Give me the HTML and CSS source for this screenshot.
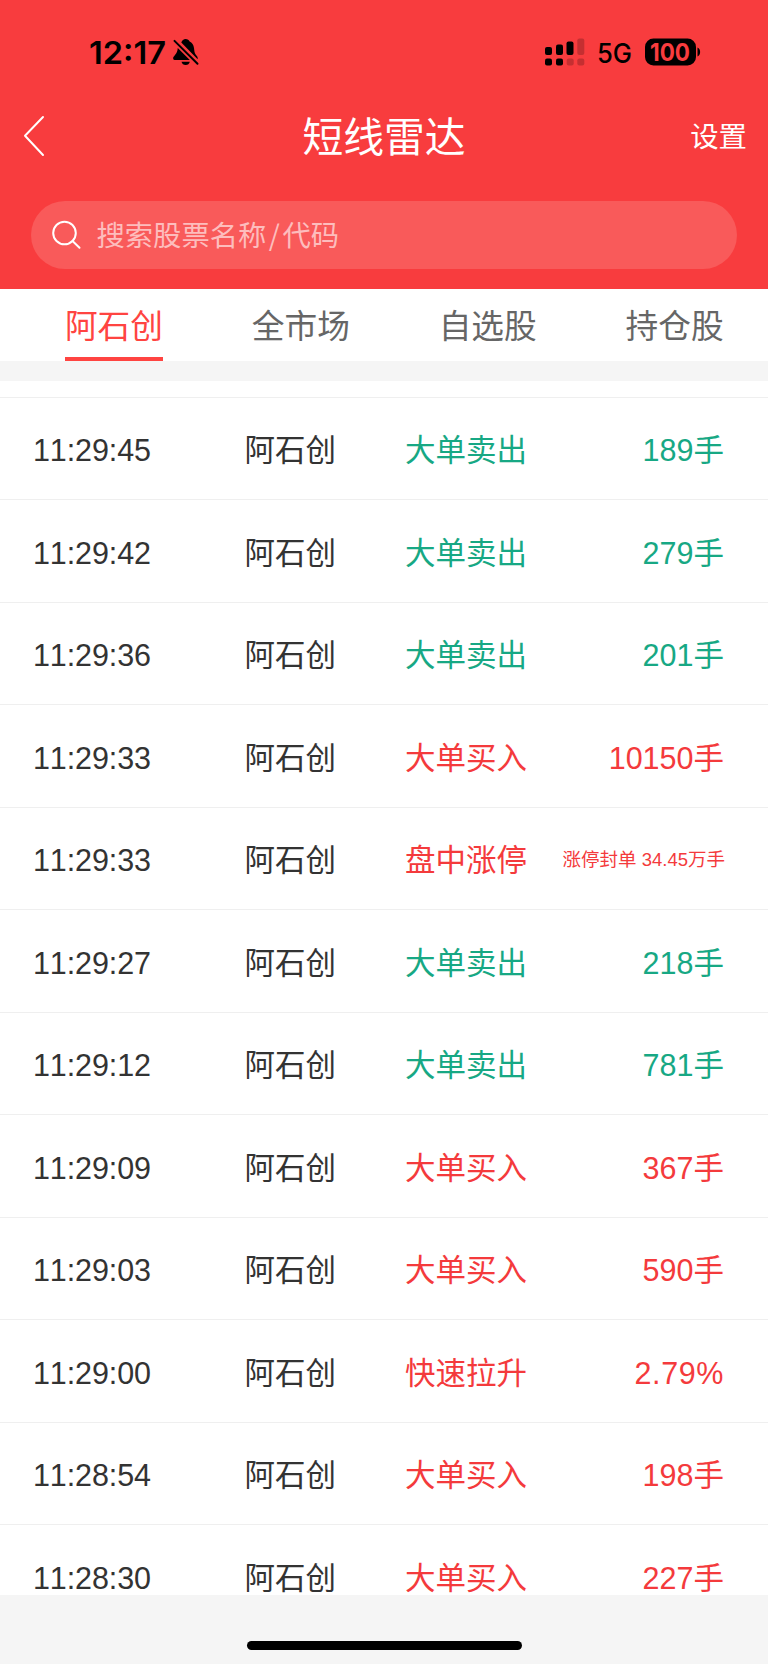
FILE: index.html
```html
<!DOCTYPE html>
<html lang="zh-CN">
<head>
<meta charset="utf-8">
<title>短线雷达</title>
<link rel="stylesheet" href="styles.css">
</head>
<body>
<div class="screen">
  <header class="header">
    <div class="status">
      <div class="status-left">
        <svg class="clock" width="79" height="46" viewBox="0 0 79 46"><text x="1" y="34" textLength="77" lengthAdjust="spacingAndGlyphs">12:17</text></svg>
        <svg class="bell" width="26" height="28" viewBox="0 0 26 28">
          <path d="M12.600 1C10.600 1 9.100 2.200 8.300 4.600L24.600 21.200C25.200 19.500 24 18.200 22.800 16.800 21.400 15 21.300 12.500 21 10 20.600 7 19 4.700 16.600 3.600 16 2 14.600 1 12.600 1z"/>
          <path d="M4.800 10C4.400 13.500 3.800 15 2 17 .5 18.700 0 19.500 .2 20.700 .5 21.700 1.200 22 2.500 22H16.800z"/>
          <path d="M8.500 23.800h8.300c-.4 2-2 3.300-4.100 3.300s-3.800-1.300-4.200-3.300z"/>
          <path class="slash" d="M1.500 2.900l23 22.800"/>
        </svg>
      </div>
      <div class="status-right">
        <svg class="signal" width="40" height="28" viewBox="0 0 40 28">
          <rect x="0" y="9" width="7" height="8" rx="2"/><rect x="11" y="6.500" width="7" height="10.500" rx="2"/><rect x="21.500" y="3.500" width="7" height="13.500" rx="2"/>
          <rect x="0" y="20.500" width="7" height="7" rx="2"/><rect x="11" y="20.500" width="7" height="7" rx="2"/>
          <g class="dim"><rect x="32.300" y=".6" width="7" height="16.400" rx="2"/><rect x="21.700" y="20.500" width="7" height="7" rx="2"/><rect x="32.300" y="20.500" width="7" height="7" rx="2"/></g>
        </svg>
        <svg class="network" width="36" height="36" viewBox="0 0 36 36"><text x="0" y="25" textLength="35" lengthAdjust="spacingAndGlyphs">5G</text></svg>
        <svg class="battery" width="57" height="32" viewBox="0 0 57 32">
          <rect x="0" y=".5" width="51" height="27" rx="8.500"/>
          <path d="M52.500 9.500c3.500 1 3.500 8 0 9z"/>
          <text x="5" y="23" textLength="40" lengthAdjust="spacingAndGlyphs">100</text>
        </svg>
      </div>
    </div>
    <div class="nav">
      <svg class="back" width="22" height="42" viewBox="0 0 22 42"><path d="M20 2L2 20.800 20 40"/></svg>
      <h1 class="title">短线雷达</h1>
      <span class="settings">设置</span>
    </div>
    <div class="search">
      <svg width="30" height="30" viewBox="0 0 30 30"><circle cx="12.500" cy="13" r="11.300"/><path d="M20.500 21l7 6.800"/></svg>
      <span class="hint">搜索股票名称<span class="divide">/</span>代码</span>
    </div>
  </header>
  <nav class="tabs">
    <div class="tab"><span class="label active">阿石创</span></div>
    <div class="tab"><span class="label">全市场</span></div>
    <div class="tab"><span class="label">自选股</span></div>
    <div class="tab"><span class="label">持仓股</span></div>
  </nav>
  <main class="list">
    <div class="row stub"></div>
    <div class="row sell"><span class="time">11:29:45</span><span class="name">阿石创</span><span class="kind">大单卖出</span><span class="value">189手</span></div>
    <div class="row sell"><span class="time">11:29:42</span><span class="name">阿石创</span><span class="kind">大单卖出</span><span class="value">279手</span></div>
    <div class="row sell"><span class="time">11:29:36</span><span class="name">阿石创</span><span class="kind">大单卖出</span><span class="value">201手</span></div>
    <div class="row buy"><span class="time">11:29:33</span><span class="name">阿石创</span><span class="kind">大单买入</span><span class="value">10150手</span></div>
    <div class="row buy"><span class="time">11:29:33</span><span class="name">阿石创</span><span class="kind">盘中涨停</span><span class="value small">涨停封单 34.45万手</span></div>
    <div class="row sell"><span class="time">11:29:27</span><span class="name">阿石创</span><span class="kind">大单卖出</span><span class="value">218手</span></div>
    <div class="row sell"><span class="time">11:29:12</span><span class="name">阿石创</span><span class="kind">大单卖出</span><span class="value">781手</span></div>
    <div class="row buy"><span class="time">11:29:09</span><span class="name">阿石创</span><span class="kind">大单买入</span><span class="value">367手</span></div>
    <div class="row buy"><span class="time">11:29:03</span><span class="name">阿石创</span><span class="kind">大单买入</span><span class="value">590手</span></div>
    <div class="row buy"><span class="time">11:29:00</span><span class="name">阿石创</span><span class="kind">快速拉升</span><span class="value percent">2.79%</span></div>
    <div class="row buy"><span class="time">11:28:54</span><span class="name">阿石创</span><span class="kind">大单买入</span><span class="value">198手</span></div>
    <div class="row buy"><span class="time">11:28:30</span><span class="name">阿石创</span><span class="kind">大单买入</span><span class="value">227手</span></div>
  </main>
  <footer class="footer"><div class="home-bar"></div></footer>
</div>
</body>
</html>
```
FILE: styles.css
```css
* { box-sizing: border-box; }
body {
  margin: 0;
  background: #fff;
  font-family: "Liberation Sans", "Noto Sans CJK SC", sans-serif;
  font-kerning: none;
  color: #333;
}
svg { display: block; flex: none; }
.screen {
  width: 768px;
  height: 1665px;
  display: flex;
  flex-direction: column;
  overflow: hidden;
}
.header {
  flex: none;
  height: 289.3px;
  background: #f83c3e;
}
.status {
  height: 90px;
  padding: 0 66px 0 88px;
  display: flex;
  justify-content: space-between;
}
.status-left { display: flex; padding-top: 30px; gap: 6px; }
.status-right { display: flex; padding-top: 37.500px; }
.status text { font-family: Inter, sans-serif; }
.clock text { font-size: 31.500px; font-weight: 600; }
.bell { margin-top: 8px; }
.slash { fill: none; stroke: #000; stroke-width: 2; stroke-linecap: round; }
.dim { opacity: .2; }
.network { margin-left: 12px; }
.network text { font-size: 26.500px; font-weight: 500; }
.battery { margin-left: 12px; }
.battery text { font-size: 24.500px; font-weight: 700; fill: #f83c3e; }
.nav {
  height: 92px;
  padding: 0 21px 0 23px;
  display: grid;
  grid-template-columns: 1fr auto 1fr;
  align-items: center;
  color: #fff;
}
.back path { fill: none; stroke: #fff; stroke-width: 2; stroke-linecap: round; stroke-linejoin: round; }
.title { margin: 0; padding: 3px 2px 0 0; font-size: 40.800px; font-weight: 400; line-height: 60px; }
.settings { justify-self: end; padding-top: 2px; font-size: 28.400px; line-height: 40px; }
.search {
  width: 706px;
  height: 68px;
  margin: 19px 0 0 31px;
  padding-left: 21px;
  border-radius: 34px;
  background: #f95a5a;
  display: flex;
  align-items: center;
  gap: 14.500px;
}
.search svg { fill: none; stroke: #fff; stroke-width: 2; stroke-linecap: round; }
.hint { font-size: 28.300px; line-height: 40px; color: #fdbdbd; }
.divide { padding: 0 2.500px; font-family: "Noto Sans CJK SC", sans-serif; }
.tabs {
  flex: none;
  height: 71.700px;
  padding-left: 20.500px;
  display: grid;
  grid-template-columns: repeat(4, 1fr);
}
.tab { display: flex; justify-content: center; }
.label {
  height: 71.700px;
  font-size: 32.700px;
  line-height: 76px;
  color: #666;
}
.active { color: #ff4441; border-bottom: 4px solid #ff4441; }
.list {
  flex: none;
  height: 1234px;
  border-top: 20px solid #f5f5f5;
  overflow: hidden;
}
.row {
  height: 102.500px;
  padding: 3px 44px 0 33px;
  border-bottom: 1px solid #efefef;
  display: grid;
  grid-template-columns: 211.500px 160.500px 1fr auto;
  align-items: center;
  font-size: 30.500px;
  line-height: 44px;
}
.stub { height: 17px; }
.time { letter-spacing: -.1px; }
.sell .kind, .sell .value { color: #17a884; }
.buy .kind, .buy .value { color: #f43a3c; }
.kind, .value { white-space: nowrap; }
.value.small { margin-right: -1px; font-size: 18.500px; }
.percent { letter-spacing: .6px; }
.footer {
  height: 69px;
  background: #f5f5f5;
  display: flex;
  justify-content: center;
  padding-top: 46px;
}
.home-bar { width: 275px; height: 9.500px; border-radius: 5px; background: #000; }
```
